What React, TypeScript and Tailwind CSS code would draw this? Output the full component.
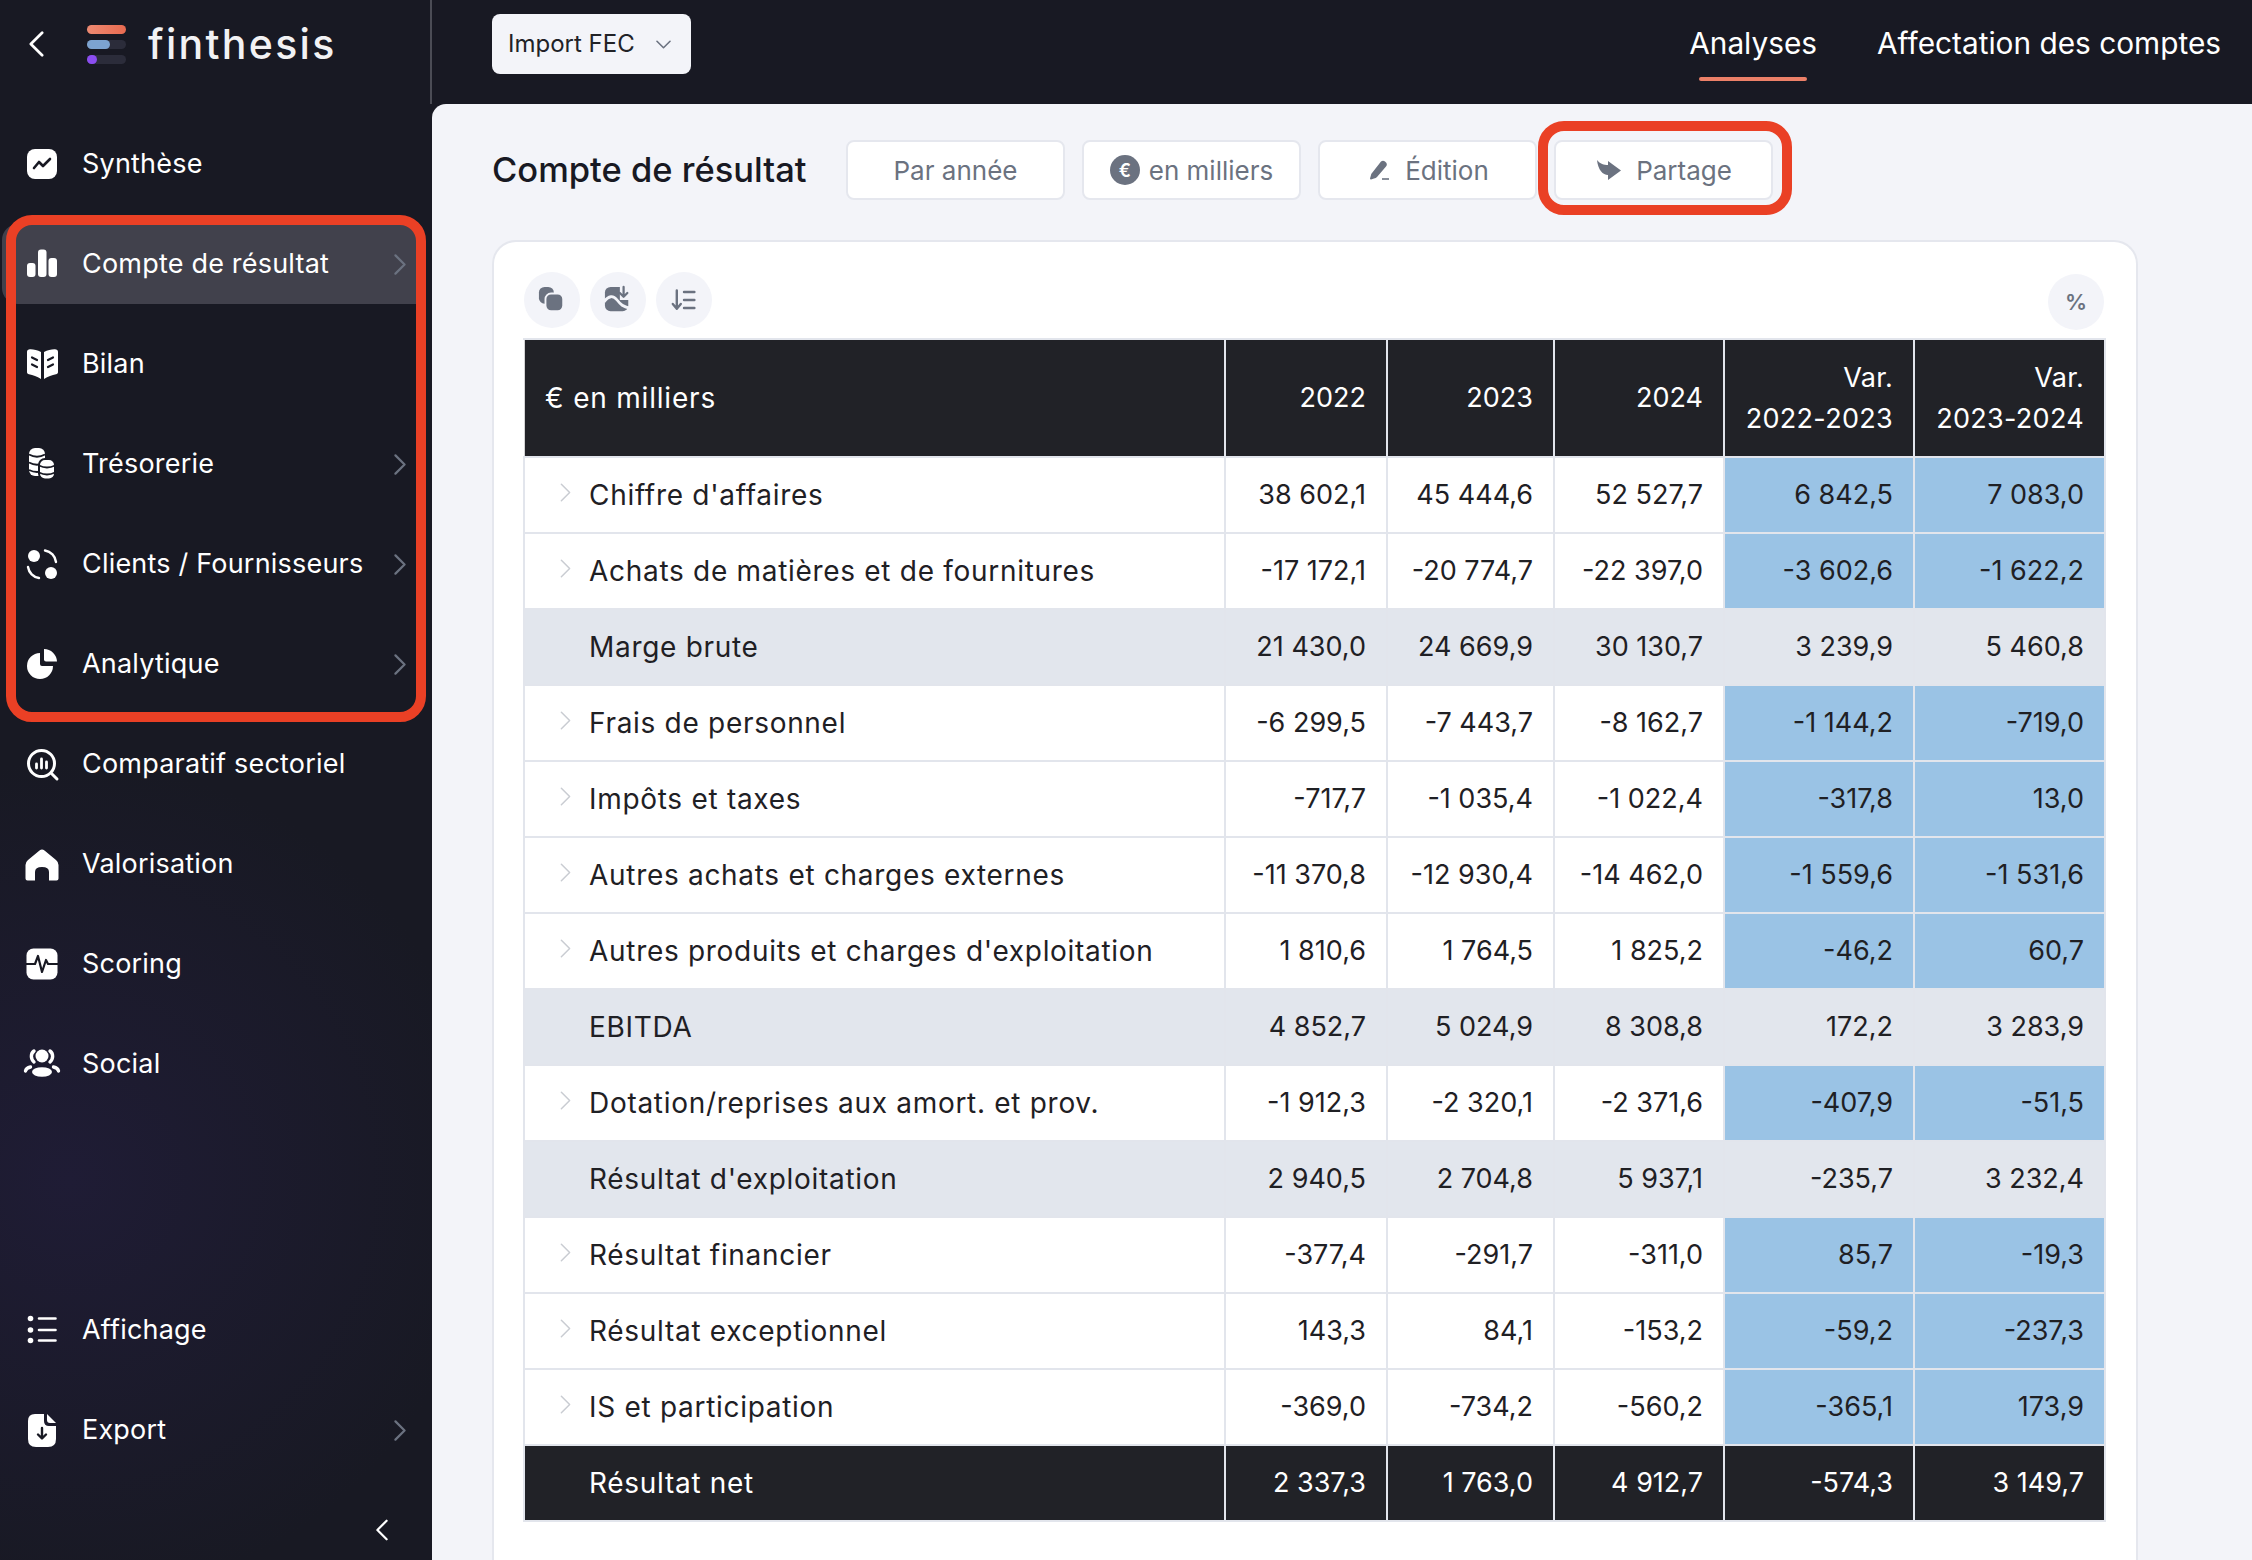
import type { ReactNode } from 'react';

const font = { fontFamily: 'Inter, "Liberation Sans", sans-serif' };

function Chevron({ dir = 'right', className, sw = 2.4 }: { dir?: 'right' | 'left' | 'down'; className?: string; sw?: number }) {
  const pts = dir === 'right' ? '2,2 12,12 2,22' : dir === 'left' ? '12,2 2,12 12,22' : '2,2 12,12 22,2';
  const box = dir === 'down' ? '0.5 0.5 23 13' : '0.5 0.5 13 23';
  return (
    <svg viewBox={box} className={className} fill="none" stroke="currentColor" strokeWidth={sw} strokeLinecap="round" strokeLinejoin="round">
      <polyline points={pts} />
    </svg>
  );
}

function Ico({ children, className = 'w-[30px] h-[30px] text-white' }: { children: ReactNode; className?: string }) {
  return (
    <svg viewBox="0 0 30 30" className={`${className} shrink-0 overflow-visible`} fill="currentColor">
      {children}
    </svg>
  );
}

const DARK = '#181923';
const PANEL = '#f3f4f9';

const icons: Record<string, ReactNode> = {
  synthese: (
    <Ico>
      <rect x="0" y="0" width="30" height="30" rx="8" />
      <polyline points="7,19 12,13 16,17 23,10" fill="none" stroke={DARK} strokeWidth="2.6" strokeLinecap="round" strokeLinejoin="round" />
    </Ico>
  ),
  compte: (
    <Ico>
      <rect x="0" y="14" width="8.5" height="14" rx="3" />
      <rect x="11" y="0.5" width="8.5" height="27.5" rx="3" />
      <rect x="21.5" y="9" width="8.5" height="19" rx="3" />
    </Ico>
  ),
  bilan: (
    <Ico>
      <path d="M14 3C10 1 5 0 2 0.5 .8.7 0 1.500 0 3V23C0 24.500 .8 25 2 25.300 6 26 10 27.500 14 30Z" />
      <path d="M17 3C21 1 26 0 29 .5 30.200.7 31 1.500 31 3V23C31 24.500 30.200 25 29 25.300 25 26 21 27.500 17 30Z" />
      <g stroke={DARK} strokeWidth="2.2" strokeLinecap="round">
        <path d="M5 8.500 10 11M5 15.500 10 18" />
        <path d="M26 8.500 21 11M26 15.500 21 18" />
      </g>
    </Ico>
  ),
  tresorerie: (
    <Ico>
      <rect x="2" y="-1" width="16" height="28" rx="6" />
      <path d="M2 5.500Q10 10 18 5.500M2 13.500Q10 18 18 13.500M2 21Q10 25 18 21" fill="none" stroke={DARK} strokeWidth="1.800" />
      <rect x="12" y="10" width="16" height="20.500" rx="6" stroke={DARK} strokeWidth="2" />
      <path d="M12 16.500Q20 20.500 28 16.500M12 23.500Q20 27.500 28 23.500" fill="none" stroke={DARK} strokeWidth="1.800" />
    </Ico>
  ),
  clients: (
    <Ico>
      <circle cx="7" cy="7" r="6" />
      <circle cx="24" cy="24" r="6" />
      <path d="M18 1.500A13 13 0 0 1 29 13M1 18A13 13 0 0 0 12 29" fill="none" stroke="currentColor" strokeWidth="2.4" strokeLinecap="round" />
    </Ico>
  ),
  analytique: (
    <Ico>
      <path d="M17 0A13 13 0 0 1 30 12.500H19A2 2 0 0 1 17 10.500Z" />
      <path d="M13 4V15A2 2 0 0 0 15 17H26A13 13 0 1 1 13 4Z" />
    </Ico>
  ),
  comparatif: (
    <Ico>
      <circle cx="14.500" cy="14.500" r="13" fill="none" stroke="currentColor" strokeWidth="3" />
      <path d="M25 25 30 30" stroke="currentColor" strokeWidth="3" strokeLinecap="round" />
      <path d="M9.500 15V19M14.500 10V19M19.500 13V19" stroke="currentColor" strokeWidth="2.800" strokeLinecap="round" />
    </Ico>
  ),
  valorisation: (
    <Ico>
      <path d="M12.500 1.500Q15 -.7 17.500 1.500L29 11Q31.500 13 31.500 16V29.500Q31.500 31.500 29.500 31.500H22V23Q22 18 15 18 8 18 8 23V31.500H.5Q-1.500 31.500 -1.500 29.500V16Q-1.500 13 1 11Z" />
    </Ico>
  ),
  scoring: (
    <Ico>
      <rect x="-.5" y="-.5" width="31" height="31" rx="7" />
      <polyline points="-1,15 8,15 11,7 15,23 19,11 21,15 31,15" fill="none" stroke={DARK} strokeWidth="2.200" strokeLinejoin="round" />
    </Ico>
  ),
  social: (
    <Ico>
      <circle cx="15" cy="7" r="6.500" />
      <ellipse cx="15" cy="23" rx="10" ry="4.800" />
      <path d="M7 2C3.500 4.500 3.500 10 7 13M23 2C26.500 4.500 26.500 10 23 13" fill="none" stroke="currentColor" strokeWidth="3.400" strokeLinecap="round" />
      <path d="M-1.500 22C-1 19 1 18.500 3.500 18M31.500 22C31 19 29 18.500 26.500 18" fill="none" stroke="currentColor" strokeWidth="3.400" strokeLinecap="round" />
    </Ico>
  ),
  affichage: (
    <Ico>
      <circle cx="3.500" cy="3.500" r="2.800" />
      <circle cx="3.500" cy="15" r="2.800" />
      <circle cx="3.500" cy="25.500" r="2.800" />
      <path d="M12 3.500H28.500M12 15H28.500M12 25.500H28.500" stroke="currentColor" strokeWidth="2.600" strokeLinecap="round" />
    </Ico>
  ),
  export: (
    <Ico>
      <path d="M1 6Q1 -1 8 -1H17V6Q17 11 22 11H29V24Q29 32 21 32H9Q1 32 1 24Z" />
      <path d="M20 -1 29 8H23Q20 8 20 5Z" />
      <path d="M15 13V23M11 19.500 15 23.500 19 19.500" fill="none" stroke={DARK} strokeWidth="2.400" strokeLinecap="round" strokeLinejoin="round" />
    </Ico>
  ),
};

function NavItem({ icon, label, arrow, active }: { icon: string; label: string; arrow?: boolean; active?: boolean }) {
  return (
    <div className={`flex items-center h-20 w-[418px] ml-[2px] pl-[25px] pr-[14px] rounded-l-[16px] ${active ? 'bg-[#41414c]' : ''}`}>
      {icons[icon]}
      <span className="ml-[25px] text-[27px] text-white tracking-[0.2px]">{label}</span>
      {arrow && <Chevron className="ml-auto w-[12px] h-[21px] text-[#6b7280]" />}
    </div>
  );
}

function Sidebar() {
  return (
    <aside className="relative flex flex-col w-[432px] h-full shrink-0 bg-[radial-gradient(circle_at_70px_1180px,#1f1c35_0%,#181923_420px)]">
      <div className="flex items-center h-[104px] pb-4 pl-[29px] border-r-2 border-[#4b4c55]">
        <Chevron dir="left" className="w-[15px] h-[26px] text-white" />
        <div className="ml-[43px] flex flex-col gap-[6px] w-[39px]">
          <div className="h-[9px] rounded-full bg-gradient-to-r from-[#ed8a72] to-[#e86a50]" />
          <div className="h-[9px] rounded-full bg-[#2b2c3a]">
            <div className="h-full w-[23px] rounded-full bg-[#7da3d0]" />
          </div>
          <div className="h-[9px] rounded-full bg-[#2b2c3a]">
            <div className="h-full w-[10px] rounded-full bg-[#8b4df0]" />
          </div>
        </div>
        <span className="ml-[22px] text-[41px] font-medium text-[#f2f2f4] tracking-[2.300px] leading-none">finthesis</span>
      </div>
      <nav className="flex flex-col gap-5 pt-5">
        <NavItem icon="synthese" label="Synthèse" />
        <NavItem icon="compte" label="Compte de résultat" arrow active />
        <NavItem icon="bilan" label="Bilan" />
        <NavItem icon="tresorerie" label="Trésorerie" arrow />
        <NavItem icon="clients" label="Clients / Fournisseurs" arrow />
        <NavItem icon="analytique" label="Analytique" arrow />
        <NavItem icon="comparatif" label="Comparatif sectoriel" />
        <NavItem icon="valorisation" label="Valorisation" />
        <NavItem icon="scoring" label="Scoring" />
        <NavItem icon="social" label="Social" />
      </nav>
      <div className="mt-auto flex flex-col gap-5">
        <NavItem icon="affichage" label="Affichage" />
        <NavItem icon="export" label="Export" arrow />
        <div className="flex justify-end h-[70px] pt-[29px] pr-[44px]">
          <Chevron dir="left" className="w-[12px] h-[22px] text-white" />
        </div>
      </div>
      {/* red highlight drawn on the screenshot */}
      <div className="absolute left-[6px] top-[215px] w-[420px] h-[507px] border-[10px] border-[#ea4025] rounded-[26px]" />
    </aside>
  );
}

function Btn({ children }: { children: ReactNode }) {
  return (
    <div className="flex items-center justify-center gap-[15px] w-[219px] h-[60px] bg-white border-2 border-[#e5e7ee] rounded-[8px] text-[26px] text-[#6b7280]">
      {children}
    </div>
  );
}

function Round({ children, className = '' }: { children: ReactNode; className?: string }) {
  return <div className={`flex items-center justify-center w-[56px] h-[56px] rounded-full bg-[#f3f4f9] text-[#6b7280] ${className}`}>{children}</div>;
}

type Row = { label: string; vals: string[]; kind?: 'sub' | 'total' };

const rows: Row[] = [
  { label: "Chiffre d'affaires", vals: ['38 602,1', '45 444,6', '52 527,7', '6 842,5', '7 083,0'] },
  { label: 'Achats de matières et de fournitures', vals: ['-17 172,1', '-20 774,7', '-22 397,0', '-3 602,6', '-1 622,2'] },
  { label: 'Marge brute', vals: ['21 430,0', '24 669,9', '30 130,7', '3 239,9', '5 460,8'], kind: 'sub' },
  { label: 'Frais de personnel', vals: ['-6 299,5', '-7 443,7', '-8 162,7', '-1 144,2', '-719,0'] },
  { label: 'Impôts et taxes', vals: ['-717,7', '-1 035,4', '-1 022,4', '-317,8', '13,0'] },
  { label: 'Autres achats et charges externes', vals: ['-11 370,8', '-12 930,4', '-14 462,0', '-1 559,6', '-1 531,6'] },
  { label: "Autres produits et charges d'exploitation", vals: ['1 810,6', '1 764,5', '1 825,2', '-46,2', '60,7'] },
  { label: 'EBITDA', vals: ['4 852,7', '5 024,9', '8 308,8', '172,2', '3 283,9'], kind: 'sub' },
  { label: 'Dotation/reprises aux amort. et prov.', vals: ['-1 912,3', '-2 320,1', '-2 371,6', '-407,9', '-51,5'] },
  { label: "Résultat d'exploitation", vals: ['2 940,5', '2 704,8', '5 937,1', '-235,7', '3 232,4'], kind: 'sub' },
  { label: 'Résultat financier', vals: ['-377,4', '-291,7', '-311,0', '85,7', '-19,3'] },
  { label: 'Résultat exceptionnel', vals: ['143,3', '84,1', '-153,2', '-59,2', '-237,3'] },
  { label: 'IS et participation', vals: ['-369,0', '-734,2', '-560,2', '-365,1', '173,9'] },
  { label: 'Résultat net', vals: ['2 337,3', '1 763,0', '4 912,7', '-574,3', '3 149,7'], kind: 'total' },
];

function DataTable() {
  const th = 'border-2 border-[#e2e5ec] border-l-white/80 bg-[#212227] text-white font-normal text-right px-5 align-middle whitespace-nowrap';
  return (
    <table className="w-[1581px] table-fixed border-collapse text-[27px] text-[#1f2024]">
      <colgroup>
        <col className="w-[701px]" />
        <col className="w-[162px]" />
        <col className="w-[167px]" />
        <col className="w-[170px]" />
        <col className="w-[190px]" />
        <col className="w-[191px]" />
      </colgroup>
      <thead>
        <tr className="h-[118px]">
          <th className={`${th} !text-left !px-5 border-l-[#e2e5ec] text-[28px] tracking-[0.8px]`}>€ en milliers</th>
          <th className={th}>2022</th>
          <th className={th}>2023</th>
          <th className={th}>2024</th>
          <th className={`${th} leading-[41px] tracking-[0.3px]`}>Var.<br />2022-2023</th>
          <th className={`${th} leading-[41px] tracking-[0.3px]`}>Var.<br />2023-2024</th>
        </tr>
      </thead>
      <tbody>
        {rows.map((r) => {
          const bg = r.kind === 'sub' ? 'bg-[#e2e6ed]' : r.kind === 'total' ? 'bg-[#212227] text-white' : 'bg-white';
          const line = r.kind === 'total' ? 'border-l-white/80' : r.kind === 'sub' ? 'border-l-[#e2e6ed]' : '';
          return (
            <tr key={r.label} className="h-[76px]">
              <td className={`border-2 border-[#e2e5ec] pl-[64px] relative text-[28px] tracking-[0.7px] ${bg}`}>
                {!r.kind && <Chevron sw={1.8} className="absolute left-[35px] top-[25px] w-[11px] h-[19px] text-[#c9ccd2]" />}
                {r.label}
              </td>
              {r.vals.map((v, i) => {
                const blue = i >= 3 && !r.kind;
                return (
                  <td key={i} className={`border-2 border-[#e2e5ec] text-right px-5 ${line} ${blue ? 'bg-[#9ac3e5]' : bg}`}>
                    {v}
                  </td>
                );
              })}
            </tr>
          );
        })}
      </tbody>
    </table>
  );
}

export default function App() {
  return (
    <div style={font} className="flex w-[2252px] h-[1560px] overflow-hidden bg-[#181923]">
      <Sidebar />
      <div className="flex flex-col flex-1 min-w-0">
        <header className="flex items-center h-[104px] pb-4 pl-[60px] pr-[31px] shrink-0">
          <div className="flex items-center w-[199px] h-[60px] pl-4 rounded-[8px] bg-[#f3f4f9] text-[24px] text-[#212227]">
            Import FEC
            <Chevron dir="down" className="ml-auto mr-5 w-[15px] h-[9px] text-[#6b7280]" />
          </div>
          <div className="ml-auto flex items-center gap-[60px] text-[29.800px] text-white">
            <div className="relative -translate-y-[1px]">
              Analyses
              <div className="absolute left-[10px] right-[10px] top-[56px] h-[4px] rounded-[2px] bg-[#ec8068]" />
            </div>
            <div className="-translate-y-[1px]">Affectation des comptes</div>
          </div>
        </header>
        <main className="relative flex-1 min-h-0 flex flex-col pl-[60px] pt-9 bg-[#f3f4f9] rounded-tl-[14px]">
          <div className="flex items-center h-[60px]">
            <h1 className="w-[354px] text-[34.500px] font-medium text-[#181923]">Compte de résultat</h1>
            <div className="flex gap-[17px]">
              <Btn>Par année</Btn>
              <Btn>
                <span className="flex items-center justify-center w-[30px] h-[30px] mr-[-6px] rounded-full bg-[#6b7280] text-white text-[18px] font-semibold">€</span>
                en milliers
              </Btn>
              <Btn>
                <svg viewBox="0 0 20 20" className="w-[20px] h-[20px] ml-[4px] shrink-0" fill="currentColor">
                  <path d="M11 1.500Q13 0 15 1.500L16.500 3Q17.500 5 16 6.500L7 17Q6 18 4 18.500L1 19.500Q0 19.500 0 18.500L1 15Q1 14 2 13Z" />
                  <path d="M12 19H19" stroke="currentColor" strokeWidth="1.600" />
                </svg>
                Édition
              </Btn>
              <Btn>
                <svg viewBox="0 0 24 20" className="w-[24px] h-[20px] ml-[2px] shrink-0" fill="currentColor">
                  <path d="M0 0C3 4 7 5 11 5L11 1 24 10.500 11 20 11 15C6 15 1 10 0 0Z" />
                </svg>
                Partage
              </Btn>
            </div>
          </div>
          <section className="flex-1 mt-10 w-[1646px] pl-[29px] pt-[30px] bg-white border-2 border-b-0 border-[#e5e7ee] rounded-t-[24px]">
            <div className="flex justify-between w-[1581px] h-[66px] pl-[1px]">
              <div className="flex gap-[10px]">
                <Round>
                  <Ico className="w-[28px] h-[28px]">
                    <rect x="1" y="1" width="16" height="18" rx="6" />
                    <rect x="8" y="8" width="19" height="19" rx="6" stroke={PANEL} strokeWidth="2" />
                  </Ico>
                </Round>
                <Round>
                  <Ico className="w-[28px] h-[28px]">
                    <rect x="1" y="1" width="25" height="26" rx="6" />
                    <rect x="17" y="-1" width="12" height="16" fill={PANEL} />
                    <path d="M0 17C5 10 10 10 14 15S20 22 28 24" fill="none" stroke={PANEL} strokeWidth="3" />
                    <path d="M21 1V11M17 7.500 21 11.500 25 7.500" fill="none" stroke="currentColor" strokeWidth="2.400" strokeLinecap="round" strokeLinejoin="round" />
                  </Ico>
                </Round>
                <Round>
                  <Ico className="w-[24px] h-[24px]">
                    <path d="M6 3V25M1 20 6 26 11 20" fill="none" stroke="currentColor" strokeWidth="3" strokeLinecap="round" strokeLinejoin="round" />
                    <path d="M15 5H28M15 15H28M15 25H28" stroke="currentColor" strokeWidth="3" strokeLinecap="round" />
                  </Ico>
                </Round>
              </div>
              <Round className="mt-[2px] text-[22px] font-semibold">%</Round>
            </div>
            <DataTable />
          </section>
          {/* red highlight drawn on the screenshot */}
          <div className="absolute left-[1106px] top-[17px] w-[254px] h-[94px] border-[10px] border-[#ea4025] rounded-[26px]" />
        </main>
      </div>
    </div>
  );
}
